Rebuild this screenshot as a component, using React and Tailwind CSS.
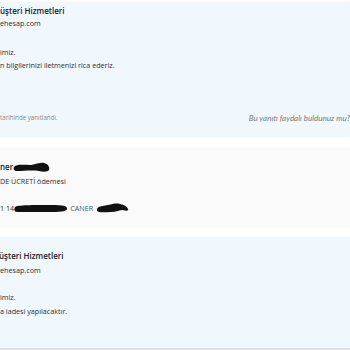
import React from 'react';

const Blob = ({ w, h, d }) => (
    <svg width={w} height={h} viewBox={`0 0 ${w} ${h}`} className="shrink-0">
        <path d={d} fill="#111" />
    </svg>
);

const Line = ({ className = '', children }) => (
    <div className={`whitespace-nowrap ${className}`}>{children}</div>
);

const App = () => {
    return (
        <div className="w-[350px] h-[350px] overflow-hidden bg-white flex flex-col text-[#2f2f2f]" style={{ fontFamily: '"Open Sans", "Noto Sans", sans-serif' }}>
            <div className="mt-[2px] bg-[#f0f7fd] pt-[3px] pb-[14px] shadow-[0_0_3px_rgba(0,0,0,0.05)]">
                <Line className="text-[8px] leading-[12px] font-semibold text-[#222]">üşteri Hizmetleri</Line>
                <Line className="text-[7.2px] leading-[13px]">ehesap.com</Line>
                <Line className="mt-[16px] text-[7.2px] leading-[13px]">imiz.</Line>
                <Line className="text-[7.2px] leading-[13px]">n bilgilerinizi iletmenizi rica ederiz.</Line>
                <div className="mt-[41px] flex items-center justify-between h-[10px]">
                    <Line className="text-[6.2px] leading-[10px] text-[#888]">tarihinde yanıtlandı.</Line>
                    <Line className="text-[8px] leading-[10px] italic text-[#7a7a7a]">
                        <span style={{ fontFamily: '"Lato", sans-serif' }}>Bu yanıtı faydalı buldunuz mu?</span>
                    </Line>
                </div>
            </div>

            <div className="mt-[11px] bg-[#fafafa] pt-[13px] pb-[13px] shadow-[0_0_3px_rgba(0,0,0,0.04)]">
                <div className="flex items-center h-[12px]">
                    <span className="text-[8px] leading-[12px] font-semibold text-[#222]">ner</span>
                    <Blob w={37} h={12} d="M1 6 C3 3 10 4 18 4 C24 3 28 1 31 2 C35 3 37 6 36 9 C35 11 30 11 26 10 C20 9 10 10 4 10 C1 10 0 8 1 6 Z" />
                </div>
                <Line className="mt-[2px] text-[7.2px] leading-[12px]">DE ÜCRETİ ödemesi</Line>
                <div className="mt-[15px] flex items-center h-[12px] text-[7.2px] leading-[12px]">
                    <span>1 14</span>
                    <Blob w={54} h={9} d="M1 3 C3 1 20 1 35 1 C45 1 52 1 53 4 C54 7 48 8 38 8 C25 8 10 8 3 8 C0 8 0 5 1 3 Z" />
                    <span className="ml-[2px] text-[#555]">CANER</span>
                    <span className="ml-[3px]">
                        <Blob w={33} h={12} d="M1 7 C2 4 7 4 12 3 C17 2 20 1 24 2 C28 3 31 4 32 7 C33 9 30 9 27 8 C24 8 20 10 15 10 C9 10 3 11 1 9 Z" />
                    </span>
                </div>
            </div>

            <div className="mt-[10px] bg-[#f0f7fd] pt-[13px] flex-1 shadow-[0_0_3px_rgba(0,0,0,0.05)]">
                <Line className="-ml-[1px] text-[8px] leading-[12px] font-semibold text-[#222]">üşteri Hizmetleri</Line>
                <Line className="mt-[2px] text-[7.2px] leading-[12px]">ehesap.com</Line>
                <Line className="mt-[15px] text-[7.2px] leading-[12px]">imiz.</Line>
                <Line className="mt-[2px] text-[7.2px] leading-[12px]">a iadesi yapılacaktır.</Line>
            </div>
            <div className="h-[2px] bg-[#e0e0e0] shrink-0" />
        </div>
    );
};

export default App;
